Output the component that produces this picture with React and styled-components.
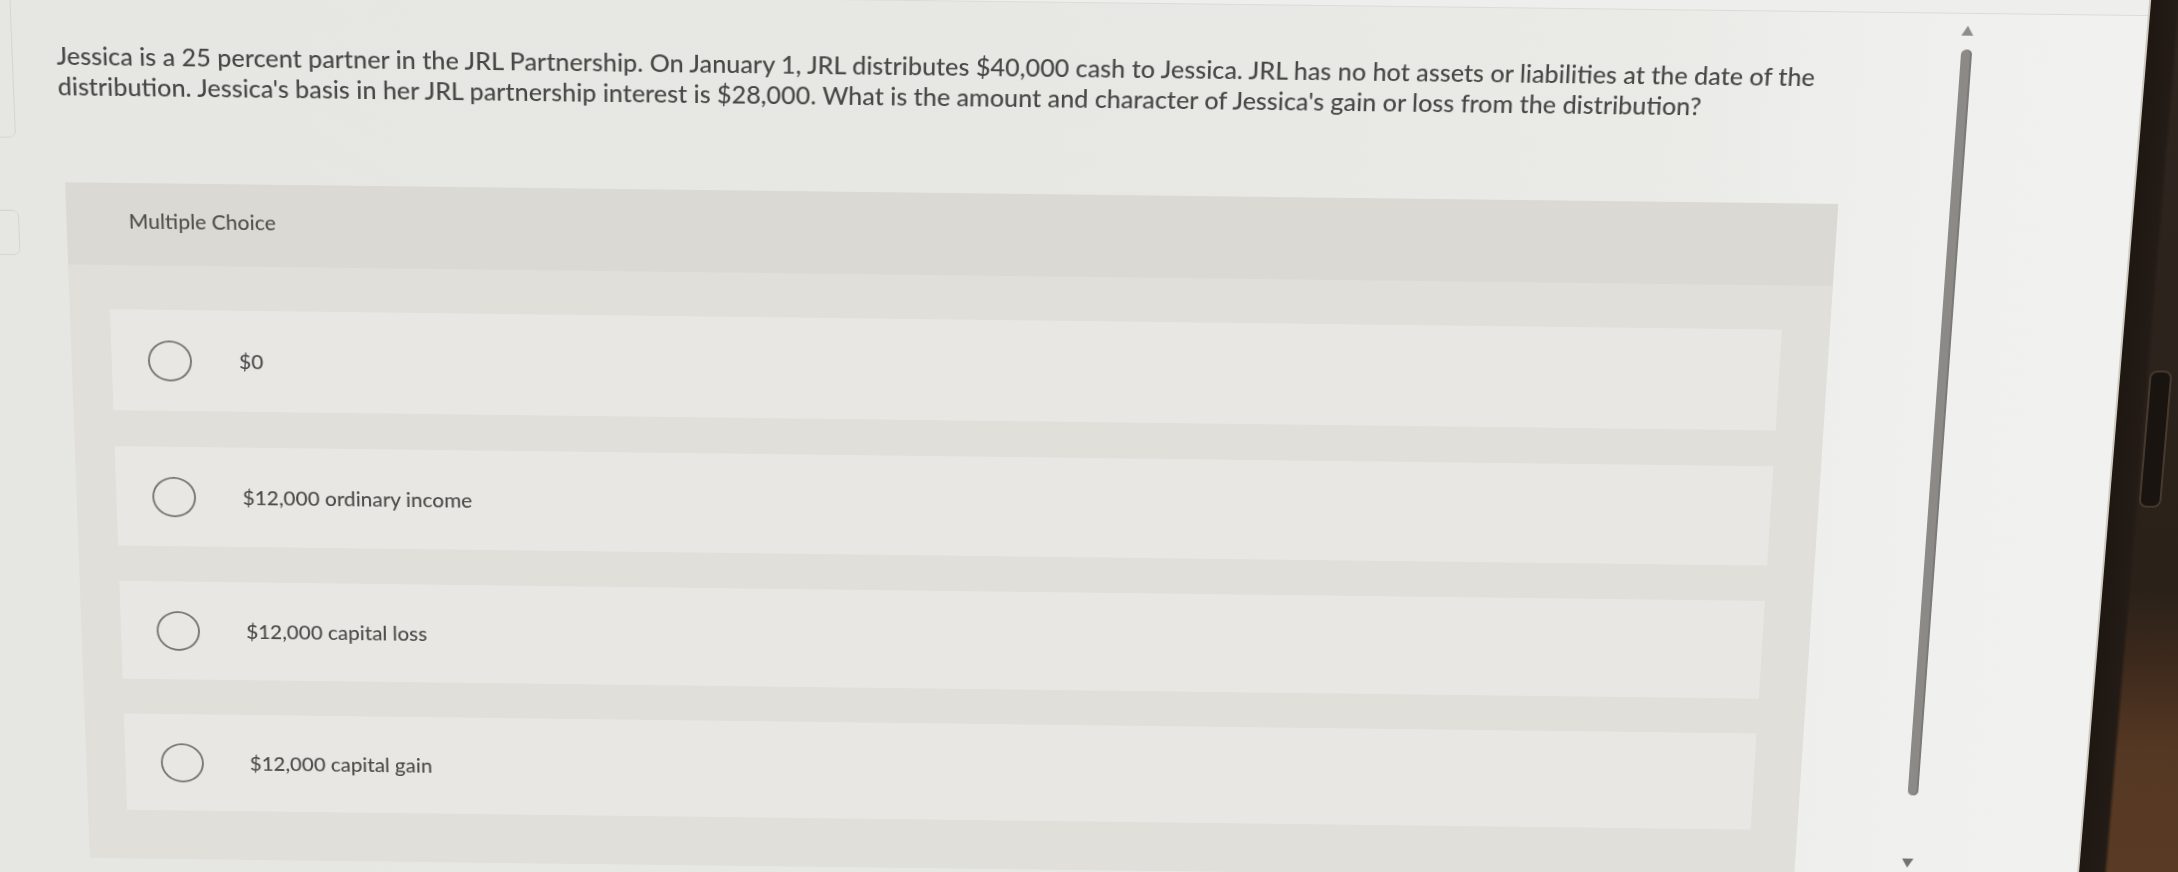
import React from 'react';
import styled, { createGlobalStyle } from 'styled-components';

const Global = createGlobalStyle`
  html, body { margin: 0; padding: 0; width: 2178px; height: 872px; overflow: hidden; background: #e8e8e5; }
  #root { width: 2178px; height: 872px; overflow: hidden; }
  * { box-sizing: border-box; }
`;

/* The photo was taken at an angle: the whole screen is laid out flat and then
   tilted with one perspective transform so edges converge like in the picture. */
const Frame = styled.div`
  display: flex;
  width: 2300px;
  height: 965px;
  margin: -20px 0 0 -40px;
  font-family: Lato, "Noto Sans", sans-serif;
  font-weight: 500;
  transform-origin: 955px 20px;
  transform: perspective(2000px) rotateZ(0.7deg) rotateX(-6.5deg);
`;

const Screen = styled.div`
  flex: none;
  width: 2188px;
  display: flex;
  flex-direction: column;
  background: linear-gradient(90deg, #e6e6e3 0%, #e7e7e4 50%, #eaeae7 78%, #efefed 88%, #f1f1ef 100%);
`;

const TopStrip = styled.div`
  flex: none;
  height: 21px;
  background: #eeeeec;
  border-bottom: 1px solid #dbdbd8;
`;

const Body = styled.div`
  flex: 1;
  min-height: 0;
  display: flex;
`;

const LeftRail = styled.div`
  flex: none;
  width: 56px;
  display: flex;
  flex-direction: column;
  padding-left: 10px;
`;

const StubCard = styled.div`
  margin-top: ${(p) => p.$top}px;
  width: 40px;
  height: ${(p) => p.$h}px;
  border: 1.5px solid #d5d5d1;
  border-radius: 7px;
`;

const Content = styled.main`
  flex: none;
  width: 1900px;
  padding: 50px 0 0 38px;
  display: flex;
  flex-direction: column;
`;

const Question = styled.p`
  margin: 0;
  max-width: 1860px;
  font-size: 25.3px;
  line-height: 30.5px;
  color: #484846;
`;

const Panel = styled.section`
  margin: 84px 0 0 4px;
  width: 1793px;
  padding-bottom: 54px;
  background: #e0dfda;
`;

const PanelHeader = styled.div`
  height: 85px;
  padding: 26px 0 0 63px;
  background: #dad9d3;
  font-size: 21.4px;
  line-height: 26px;
  color: #51514f;
`;

const Options = styled.div`
  display: flex;
  flex-direction: column;
  gap: 38px;
  padding: 46px 49px 0 41px;
`;

const Option = styled.label`
  height: 106px;
  display: flex;
  align-items: center;
  padding-left: 37px;
  background: #e8e7e3;
  font-size: 21.4px;
  color: #4c4c4a;
  cursor: pointer;
`;

const Radio = styled.span`
  flex: none;
  width: 45px;
  height: 43px;
  margin-right: 48px;
  border-radius: 50%;
  border: 2.6px solid #797977;
`;

const ScrollZone = styled.div`
  flex: 1;
  display: flex;
  padding: 12px 0 0 45px;
`;

const ScrollTrack = styled.div`
  width: 16px;
  display: flex;
  flex-direction: column;
  align-items: center;
`;

const ArrowUp = styled.div`
  width: 0;
  height: 0;
  border-left: 6px solid transparent;
  border-right: 6px solid transparent;
  border-bottom: 10px solid #8e8d8a;
`;

const Thumb = styled.div`
  width: 11px;
  height: 788px;
  margin-top: 14px;
  border-radius: 6px;
  background: #8c8a86;
  box-shadow: inset -2px 0 0 #7c7a76;
`;

const ArrowDown = styled.div`
  width: 0;
  height: 0;
  margin-top: 70px;
  border-left: 6px solid transparent;
  border-right: 6px solid transparent;
  border-top: 10px solid #75736e;
`;

const Bezel = styled.div`
  flex: none;
  width: 112px;
  display: flex;
  flex-direction: column;
  padding: 385px 0 0 30px;
  border-left: 2px solid #cfcac1;
  background:
    linear-gradient(90deg, #1e1712 0, #231b15 26px, transparent 30px),
    linear-gradient(180deg, #2e261f 0%, #2a2119 64%, #3d291c 72%, #553823 82%, #5a3c25 100%);
`;

const Slot = styled.div`
  width: 23px;
  height: 145px;
  border-radius: 8px;
  border: 2px solid #47392e;
  background: #1a1410;
`;

const options = ['$0', '$12,000 ordinary income', '$12,000 capital loss', '$12,000 capital gain'];

export default function App() {
  return (
    <>
      <Global />
      <Frame>
        <Screen>
          <TopStrip />
          <Body>
            <LeftRail>
              <StubCard $top={-30} $h={180} />
              <StubCard $top={74} $h={47} />
            </LeftRail>
            <Content>
              <Question>
                Jessica is a 25 percent partner in the JRL Partnership. On January 1, JRL distributes $40,000 cash to Jessica. JRL has no hot assets or liabilities at the date of the distribution. Jessica's basis in her JRL partnership interest is $28,000. What is the amount and character of Jessica's gain or loss from the distribution?
              </Question>
              <Panel>
                <PanelHeader>Multiple Choice</PanelHeader>
                <Options>
                  {options.map((o) => (
                    <Option key={o}>
                      <Radio />
                      {o}
                    </Option>
                  ))}
                </Options>
              </Panel>
            </Content>
            <ScrollZone>
              <ScrollTrack>
                <ArrowUp />
                <Thumb />
                <ArrowDown />
              </ScrollTrack>
            </ScrollZone>
          </Body>
        </Screen>
        <Bezel>
          <Slot />
        </Bezel>
      </Frame>
    </>
  );
}
